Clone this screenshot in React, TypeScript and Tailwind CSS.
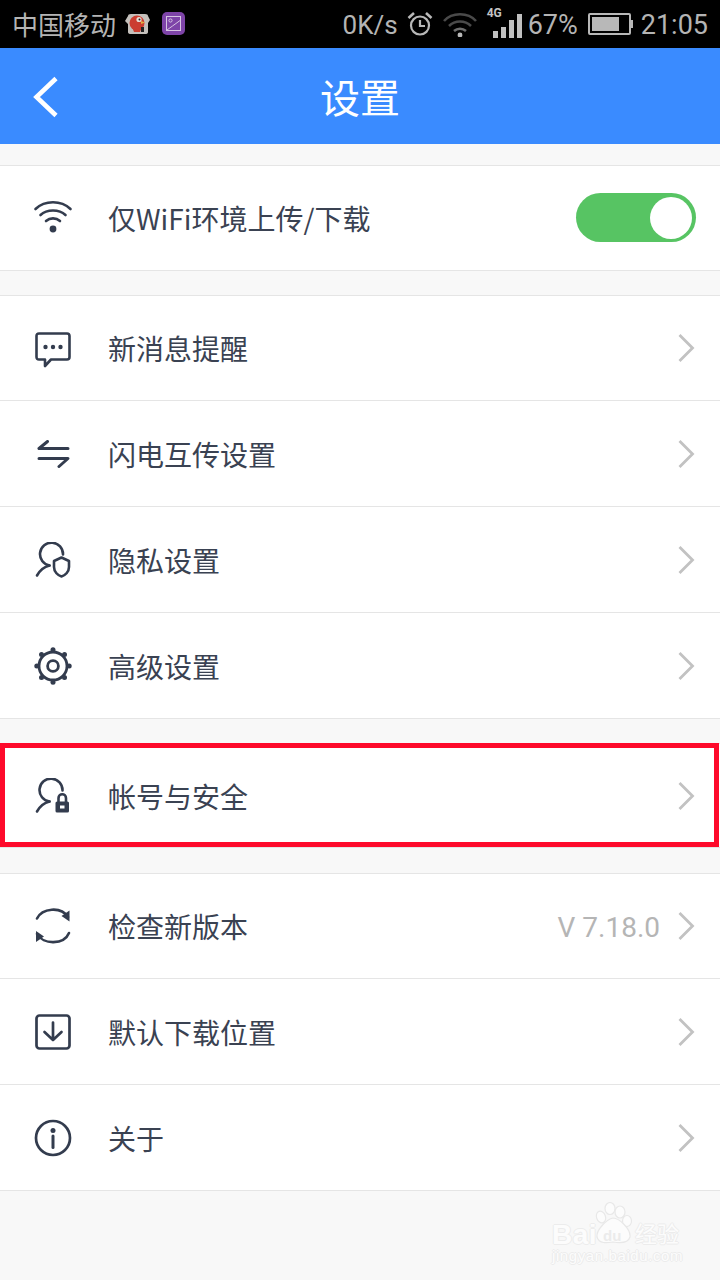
import React from "react";

const ink = "#333c4e";

const Wifi = () => (
  <svg width="40" height="36" viewBox="0 0 40 36" fill="none" stroke={ink} strokeWidth="2.6" strokeLinecap="round">
    <path d="M2.5 9 C12 0 28 0 37.5 9" />
    <path d="M7.5 15 C14 9 26 9 32.5 15" />
    <path d="M13 21 C17 17.5 23 17.5 27 21" />
    <circle cx="20" cy="29" r="3.4" fill={ink} stroke="none" />
  </svg>
);
const Chat = () => (
  <svg className="mt-[3px]" width="36" height="36" viewBox="0 0 36 36" fill="none" stroke={ink} strokeWidth="2.6" strokeLinejoin="round">
    <path d="M4 1.5 H32 Q34.5 1.5 34.5 4 V25 Q34.5 27.5 32 27.5 H16 L10 34 V27.5 H4 Q1.5 27.5 1.5 25 V4 Q1.5 1.5 4 1.5 Z" />
    <circle cx="10.5" cy="15" r="2.2" fill={ink} stroke="none" />
    <circle cx="18" cy="15" r="2.2" fill={ink} stroke="none" />
    <circle cx="25.5" cy="15" r="2.2" fill={ink} stroke="none" />
  </svg>
);
const Swap = () => (
  <svg width="34" height="28" viewBox="0 0 34 28" fill="none" stroke={ink} strokeWidth="3" strokeLinecap="round" strokeLinejoin="round">
    <path d="M11.5 1.5 L3 8.5 H32" />
    <path d="M3 18.5 H32 L23 26.5" />
  </svg>
);
const Privacy = () => (
  <svg width="36" height="36" viewBox="0 0 36 36" fill="none" stroke={ink} strokeWidth="2.6" strokeLinecap="round" strokeLinejoin="round">
    <path d="M28 12.5 A11.5 11.5 0 1 0 14.5 23.5" />
    <path d="M14.5 23.5 C8.5 25 4.5 29 2 33.5" />
    <path d="M26.5 15.5 L34 19 V25 C34 30 30 33.5 26.5 34.5 C23 33.5 19 30 19 25 V19 Z" />
  </svg>
);
const Gear = () => (
  <svg width="38" height="38" viewBox="0 0 38 38" fill="none" stroke={ink} strokeWidth="2.8">
    <circle cx="19" cy="19" r="14" />
    <circle cx="19" cy="19" r="5.4" />
    <g fill={ink} stroke="none">
      <circle cx="19" cy="2.8" r="2.5" />
      <circle cx="19" cy="35.2" r="2.5" />
      <circle cx="2.8" cy="19" r="2.5" />
      <circle cx="35.2" cy="19" r="2.5" />
      <circle cx="7.5" cy="7.5" r="2.5" />
      <circle cx="30.5" cy="7.5" r="2.5" />
      <circle cx="7.5" cy="30.5" r="2.5" />
      <circle cx="30.5" cy="30.5" r="2.5" />
    </g>
  </svg>
);
const Account = () => (
  <svg width="36" height="36" viewBox="0 0 36 36" fill="none" stroke={ink} strokeWidth="2.6" strokeLinecap="round" strokeLinejoin="round">
    <path d="M27.5 12.5 A11.5 11.5 0 1 0 14.5 23.5" />
    <path d="M14.5 23.5 C8.5 25 4.5 29 2 33.5" />
    <path d="M23.5 24 V20 C23.5 15 31 15 31 20 V24" />
    <rect x="20.5" y="23.5" width="13.5" height="11" rx="1.6" fill={ink} stroke="none" />
    <rect x="25" y="27.5" width="4.5" height="3" fill="#fff" stroke="none" />
  </svg>
);
const Sync = () => (
  <svg width="38" height="38" viewBox="0 0 38 38" fill="none" stroke={ink} strokeWidth="2.6" strokeLinecap="round">
    <path d="M3 11.5 C8 1 27 -1 34 10" />
    <path d="M35 26 C30 38 9 38 3 27" />
    <path d="M35.5 3.5 V14.5 L27.5 9 Z" fill={ink} stroke="none" />
    <path d="M2 35 V24 L10 29.5 Z" fill={ink} stroke="none" />
  </svg>
);
const Download = () => (
  <svg width="36" height="36" viewBox="0 0 36 36" fill="none" stroke={ink} strokeWidth="2.7" strokeLinecap="round" strokeLinejoin="round">
    <rect x="1.5" y="1.5" width="33" height="33" rx="3" />
    <path d="M18 8.5 V26 M9.5 18 L18 26 L26.5 18" />
  </svg>
);
const Info = () => (
  <svg width="38" height="38" viewBox="0 0 38 38" fill="none" stroke={ink} strokeWidth="2.7">
    <circle cx="19" cy="19" r="17" />
    <circle cx="19" cy="11.5" r="2.5" fill={ink} stroke="none" />
    <path d="M19 17 V28.5" strokeLinecap="round" strokeWidth="3" />
  </svg>
);

const Chevron = () => (
  <svg width="18" height="30" viewBox="0 0 18 30" fill="none" stroke="#c2c2c2" strokeWidth="2.8">
    <path d="M1.5 2 L14.5 15 L1.5 28" />
  </svg>
);

function Row({
  icon,
  label,
  right,
  last,
  h = "h-[106px]",
}: {
  icon: React.ReactNode;
  label: string;
  right?: React.ReactNode;
  last?: boolean;
  h?: string;
}) {
  return (
    <div className={`flex ${h} items-center bg-white pr-[24px] ${last ? "" : "border-b border-[#e5e5e5]"}`}>
      <div className="flex w-[108px] shrink-0 items-center justify-center pr-[2px]">{icon}</div>
      <span className="text-[28px] leading-none text-[#3a4252]">{label}</span>
      <div className="ml-auto flex items-center">{right ?? <Chevron />}</div>
    </div>
  );
}

function Group({ children, className = "" }: { children: React.ReactNode; className?: string }) {
  return <div className={`border-y border-[#e5e5e5] ${className}`}>{children}</div>;
}

const StatusBar = () => (
  <div className="flex h-[48px] items-center bg-black pl-[12px] pr-[12px] text-[26px] leading-none text-[#b4b4b4]">
    <span>中国移动</span>
    <svg className="ml-[9px]" width="26" height="24" viewBox="0 0 26 24">
      <path d="M3 4 Q3 2 6 2 H20 Q23 2 23 4 L25 8 L23 11 V20 Q23 22 20 22 H6 Q3 22 3 20 V12 L0 9 Z" fill="#c4c0bc" />
      <ellipse cx="12" cy="11" rx="7.5" ry="7.5" fill="#cb3d30" />
      <path d="M7 15 L17 15 L15 20 H9 Z" fill="#cb3d30" />
      <circle cx="14" cy="7.5" r="2.6" fill="#e8e0d8" />
      <circle cx="14.5" cy="7.5" r="1" fill="#222" />
      <path d="M16 9 L20 10.5 L16 12 Z" fill="#e0b040" />
      <rect x="16" y="15" width="3" height="5" fill="#222" />
    </svg>
    <svg className="ml-[11px]" width="24" height="24" viewBox="0 0 24 24" fill="none">
      <rect width="23" height="23" rx="5" fill="#7e44a8" />
      <rect x="4.5" y="4.5" width="14" height="14" stroke="#d6c4e2" strokeWidth="1" />
      <circle cx="8.5" cy="8.5" r="1.6" stroke="#d6c4e2" strokeWidth="1" />
      <path d="M5 18 C9 15 12 13 18 8.5" stroke="#d6c4e2" strokeWidth="1" />
    </svg>
    <span className="ml-auto pt-[2px] font-['Roboto']">0K/s</span>
    <svg className="ml-[9px]" width="26" height="26" viewBox="0 0 26 26" fill="none" stroke="#b8b8b8" strokeWidth="2.2">
      <circle cx="13" cy="14.5" r="9" />
      <path d="M13 9 V15 H18" />
      <path d="M1.5 7 L7 2 M24.5 7 L19 2" strokeWidth="2.6" />
    </svg>
    <svg className="ml-[9px]" width="36" height="26" viewBox="0 0 36 26" fill="none" stroke="#4a4a4a" strokeWidth="2.6">
      <path d="M2 10 C10 1 26 1 34 10" />
      <path d="M7 15 C13 9 23 9 29 15" />
      <path d="M12 20 C15.5 17 20.5 17 24 20" stroke="#6e6e6e" />
      <circle cx="18" cy="24" r="2.4" fill="#b8b8b8" stroke="none" />
    </svg>
    <div className="relative ml-[11px] flex h-[28px] w-[36px] items-end gap-[3px] pl-[4px]">
      <span className="absolute -top-[3px] -left-[2px] font-['Roboto'] text-[12px] font-bold text-[#c4c4c4]">4G</span>
      <span className="h-[7px] w-[5px] bg-[#c0c0c0]" />
      <span className="h-[11px] w-[5px] bg-[#c0c0c0]" />
      <span className="h-[18px] w-[5px] bg-[#c0c0c0]" />
      <span className="h-[24px] w-[5px] bg-[#c0c0c0]" />
    </div>
    <span className="ml-[3px] pt-[2px] font-['Roboto'] text-[27px]">67%</span>
    <div className="ml-[10px] flex items-center">
      <div className="flex h-[22px] w-[43px] items-stretch rounded-[2px] border-2 border-[#b8b8b8] p-[2px]">
        <div className="w-[27px] bg-[#b8b8b8]" />
      </div>
      <div className="h-[8px] w-[2px] bg-[#b8b8b8]" />
    </div>
    <span className="ml-[8px] pt-[2px] font-['Roboto'] text-[27px]">21:05</span>
  </div>
);

const NavBar = () => (
  <div className="relative flex h-[96px] items-center justify-center bg-[#3a8bff]">
    <svg className="absolute left-[32px] top-[28px]" width="28" height="42" viewBox="0 0 28 42" fill="none" stroke="#fff" strokeWidth="4.6">
      <path d="M24 2.5 L4.5 21 L24 39.5" />
    </svg>
    <span className="text-[40px] leading-none text-white">设置</span>
  </div>
);

const Toggle = () => (
  <div className="mb-[1px] flex h-[49px] w-[120px] items-center justify-end rounded-full bg-[#57c463] pr-[4px]">
    <div className="h-[42px] w-[42px] rounded-full bg-white" />
  </div>
);

const Watermark = () => (
  <div className="flex h-[89px] justify-end bg-[#f8f8f8] pr-[40px] pt-[11px]">
    <div className="relative h-[64px] w-[128px] text-[#fcfcfc] [text-shadow:1px_0_0_#ececec,-1px_0_0_#ececec,0_1px_0_#ececec,0_-1px_0_#ececec]">
      <svg className="absolute left-[43px] top-0" width="38" height="42" viewBox="0 0 38 42" fill="#fcfcfc" stroke="#e8e8e8" strokeWidth="1.2">
        <ellipse cx="6" cy="15" rx="4.5" ry="6" transform="rotate(-20 6 15)" />
        <ellipse cx="15" cy="6.5" rx="5" ry="6" />
        <ellipse cx="25" cy="10" rx="5" ry="6" />
        <ellipse cx="32" cy="19" rx="4.5" ry="5.5" />
        <path d="M18 16 C12 17 1 28 2 35 C4 42 12 41 18 40 C24 41 33 42 35 35 C36 27 24 16 18 16 Z" />
      </svg>
      <span className="absolute left-0 top-[19px] font-['Liberation_Sans'] text-[28px] font-bold leading-none tracking-[0.5px]">Bai</span>
      <span className="absolute left-[51px] top-[26px] font-['Liberation_Sans'] text-[15px] font-bold leading-none text-[#ebebeb] [text-shadow:none]">du</span>
      <span className="absolute left-[83px] top-[19px] text-[22px] leading-none">经验</span>
      <span className="absolute left-0 top-[46px] whitespace-nowrap font-['Liberation_Sans'] text-[15px] leading-none tracking-[0.6px]">
        jingyan.baidu.com
      </span>
    </div>
  </div>
);

export default function App() {
  return (
    <div className="h-[1280px] w-[720px] overflow-hidden bg-[#f8f8f8] font-['Noto_Sans_CJK_SC','Noto_Sans',sans-serif]">
      <StatusBar />
      <NavBar />
      <div className="pt-[21px]">
        <Group>
          <Row h="h-[104px]" icon={<Wifi />} label="仅WiFi环境上传/下载" right={<Toggle />} last />
        </Group>
        <Group className="mt-[24px]">
          <Row h="h-[105px]" icon={<Chat />} label="新消息提醒" />
          <Row icon={<Swap />} label="闪电互传设置" />
          <Row icon={<Privacy />} label="隐私设置" />
          <Row h="h-[105px]" icon={<Gear />} label="高级设置" last />
        </Group>
        <div className="relative mt-[24px]">
          <Group>
            <Row h="h-[103px]" icon={<Account />} label="帐号与安全" last />
          </Group>
          <div className="absolute left-0 top-0 h-[104px] w-[719px] border-[5px] border-[#fe0a2b]" />
        </div>
        <Group className="mt-[25px]">
          <Row
            h="h-[105px]"
            icon={<Sync />}
            label="检查新版本"
            right={
              <>
                <span className="mr-[18px] pt-[4px] font-['Roboto'] text-[28px] leading-none text-[#b5b5b5]">V 7.18.0</span>
                <Chevron />
              </>
            }
          />
          <Row icon={<Download />} label="默认下载位置" />
          <Row h="h-[105px]" icon={<Info />} label="关于" last />
        </Group>
        <Watermark />
      </div>
    </div>
  );
}
